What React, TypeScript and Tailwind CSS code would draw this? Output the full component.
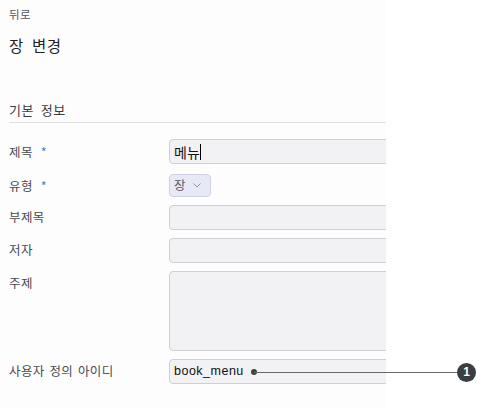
function Label({ text, required, pt = "pt-[3px]" }: { text: string; required?: boolean; pt?: string }) {
  return (
    <div className={`${pt} w-[160px] shrink-0 text-[12.5px] leading-[18px] text-[#4a4a4f] tracking-[0.4px] [word-spacing:1.5px]`}>
      {text}
      {required && <span className="ml-[8px] text-[#3b82c4]">*</span>}
    </div>
  );
}

function Box({ children, h = "h-[25px]" }: { children?: React.ReactNode; h?: string }) {
  return (
    <div className={`${h} w-[300px] shrink-0 rounded-[4px] border border-[#cfcfd4] bg-[#f2f2f4] flex items-center pl-[4px] text-[12px] text-[#111]`}>
      {children}
    </div>
  );
}

export default function App() {
  return (
    <div className="relative w-[477px] h-[408px] bg-white overflow-hidden font-['Noto_Sans_CJK_KR','Noto_Sans',sans-serif]">
      <div className="w-[386px] h-[408px] bg-[#fdfdfd] overflow-hidden pl-[9px] pt-[5px]">
        <div className="text-[11.5px] leading-[18px] text-[#55555a] tracking-[0.3px]">뒤로</div>
        <div className="mt-[11px] text-[15.5px] leading-[22px] text-[#222226] tracking-[0.6px] [word-spacing:4px]">장 변경</div>
        <div className="mt-[45px] text-[13px] leading-[18px] text-[#3c3c40] tracking-[0.6px] [word-spacing:3px]">기본 정보</div>
        <div className="mt-[3px] h-px bg-[#e0e0e2]" />

        <div className="mt-[16px] flex flex-col">
          <div className="flex items-start">
            <Label text="제목" required pt="pt-[4px]" />
            <Box>
              <span className="text-[14px] text-[#111] leading-none">메뉴</span>
              <span className="w-px h-[16px] bg-black" />
            </Box>
          </div>
          <div className="mt-[10px] flex items-start">
            <Label text="유형" required />
            <div className="h-[23px] w-[42px] rounded-[4px] border border-[#cfd1e4] bg-[#e8e9f6] flex items-center pl-[4px] gap-[7px] text-[12.5px] text-[#55555f]">
              <span>장</span>
              <svg width="8" height="5" viewBox="0 0 8 5" fill="none" stroke="#8d92b4" strokeWidth="1">
                <path d="M0.5 0.5 L4 4 L7.5 0.5" />
              </svg>
            </div>
          </div>
          <div className="mt-[8px] flex items-start">
            <Label text="부제목" />
            <Box />
          </div>
          <div className="mt-[8px] flex items-start">
            <Label text="저자" />
            <Box />
          </div>
          <div className="mt-[8px] flex items-start">
            <Label text="주제" />
            <Box h="h-[80px]" />
          </div>
          <div className="mt-[8px] flex items-start">
            <Label text="사용자 정의 아이디" />
            <Box>
              <span className="font-['Liberation_Sans',sans-serif] text-[12.5px] tracking-[0.5px]">book_menu</span>
            </Box>
          </div>
        </div>
      </div>

      <div className="absolute left-[251px] top-[369px] w-[6px] h-[6px] rounded-full bg-[#3d4145]" />
      <div className="absolute left-[254px] top-[371.5px] w-[204px] h-[1.5px] bg-[#66696c]" />
      <div className="absolute left-[457px] top-[363px] w-[19px] h-[19px] rounded-full bg-[#3a3e42] flex items-center justify-center pb-[1px] text-[12px] font-bold leading-none text-white font-['Liberation_Sans',sans-serif]">
        1
      </div>
    </div>
  );
}
